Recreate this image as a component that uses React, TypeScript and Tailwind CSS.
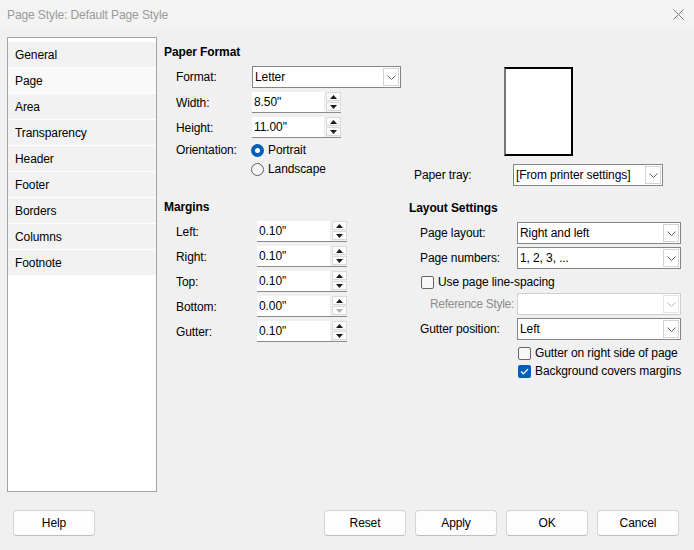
import React from "react";

const sideItems = ["General", "Page", "Area", "Transparency", "Header", "Footer", "Borders", "Columns", "Footnote"];

function Chevron({ muted }: { muted?: boolean }) {
  return (
    <svg width="9" height="5" viewBox="0 0 9 5">
      <polyline points="0.5,0.5 4.5,4.5 8.5,0.5" fill="none" stroke={muted ? "#b8b8b8" : "#606060"} strokeWidth="1" />
    </svg>
  );
}

function Dropdown({ value, w, disabled }: { value: string; w: string; disabled?: boolean }) {
  return (
    <div
      className={`flex h-[22px] bg-white border ${disabled ? "border-[#cfcfcf]" : "border-[#858585]"} ${w}`}
    >
      <div className="flex-1 flex items-center pl-[2px] truncate">{value}</div>
      <div
        className={`m-px w-[16px] flex items-center justify-center border ${disabled ? "border-[#e4e4e4]" : "border-[#d4d4d4]"}`}
      >
        <Chevron muted={disabled} />
      </div>
    </div>
  );
}

function Tri({ up, muted }: { up?: boolean; muted?: boolean }) {
  return (
    <svg width="7" height="4" viewBox="0 0 7 4">
      <polygon points={up ? "0,4 3.5,0 7,4" : "0,0 7,0 3.5,4"} fill={muted ? "#b0b0b0" : "#1a1a1a"} />
    </svg>
  );
}

function Spin({ value, w, downMuted }: { value: string; w: string; downMuted?: boolean }) {
  return (
    <div className={`flex h-[21px] border-b border-[#8a8a8a] ${w}`}>
      <div className="flex-1 bg-white flex items-center pl-[2px]">{value}</div>
      <div className="ml-[2px] w-[15px] flex flex-col gap-px pb-px">
        <div className="flex-1 bg-[#fbfbfb] border border-[#dadada] flex items-center justify-center">
          <Tri up />
        </div>
        <div className="flex-1 bg-[#fbfbfb] border border-[#dadada] flex items-center justify-center">
          <Tri muted={downMuted} />
        </div>
      </div>
    </div>
  );
}

function Radio({ checked, label }: { checked?: boolean; label: string }) {
  return (
    <div className="flex items-center h-[16px]">
      {checked ? (
        <div className="w-[13px] h-[13px] rounded-full bg-[#005fb8] flex items-center justify-center">
          <div className="w-[5px] h-[5px] rounded-full bg-white" />
        </div>
      ) : (
        <div className="w-[13px] h-[13px] rounded-full border border-[#5d5d5d] bg-[#f7f7f7]" />
      )}
      <span className="ml-[4px]">{label}</span>
    </div>
  );
}

function Check({ checked, label }: { checked?: boolean; label: string }) {
  return (
    <div className="flex items-center h-[16px]">
      {checked ? (
        <div className="w-[13px] h-[13px] rounded-[2px] bg-[#005fb8] flex items-center justify-center">
          <svg width="9" height="7" viewBox="0 0 9 7">
            <polyline points="1,3.5 3.4,5.8 8,1" fill="none" stroke="white" strokeWidth="1.2" />
          </svg>
        </div>
      ) : (
        <div className="w-[13px] h-[13px] rounded-[2px] border border-[#656565] bg-[#f7f7f7]" />
      )}
      <span className="ml-[4px] whitespace-nowrap">{label}</span>
    </div>
  );
}

function Btn({ label }: { label: string }) {
  return (
    <div className="w-[82px] h-[26px] rounded-[4px] border border-[#d3d3d3] border-b-[#bdbdbd] bg-[#fdfdfd] flex items-center justify-center">
      {label}
    </div>
  );
}

export default function App() {
  return (
    <div className="w-[694px] h-[550px] flex flex-col bg-[#f0f0f0] text-[12px] leading-[16px] text-black font-['Liberation_Sans',Arial,sans-serif] tracking-[-0.1px]">
      {/* title bar */}
      <div className="h-[29px] bg-[#f3f3f3] flex items-center justify-between pl-[7px] pr-[10px]">
        <span className="text-[#9a9a9a]">Page Style: Default Page Style</span>
        <svg width="11" height="11" viewBox="0 0 11 11">
          <path d="M0.5 0.5 L10.5 10.5 M10.5 0.5 L0.5 10.5" stroke="#7a7a7a" strokeWidth="1" />
        </svg>
      </div>

      <div className="flex pt-[8px] pl-[7px]">
        {/* sidebar */}
        <div className="w-[150px] h-[455px] border border-[#a3a3a3] bg-white pt-[4px] flex flex-col gap-px">
          {sideItems.map((s) => (
            <div
              key={s}
              className={`h-[25px] flex items-center pl-[7px] ${s === "Page" ? "bg-[#f9f9f9]" : "bg-[#f2f2f2]"}`}
            >
              {s}
            </div>
          ))}
        </div>

        {/* content */}
        <div className="ml-[7px] pt-[7px] flex flex-col">
          <div className="flex">
            {/* paper format */}
            <div className="w-[237px] flex flex-col">
              <div className="font-bold">Paper Format</div>
              <div className="pl-[12px] flex flex-col">
                <div className="flex items-center mt-[6px]">
                  <span className="w-[76px]">Format:</span>
                  <Dropdown value="Letter" w="w-[149px]" />
                </div>
                <div className="flex items-center mt-[4px]">
                  <span className="w-[76px]">Width:</span>
                  <Spin value={'8.50"'} w="w-[89px]" />
                </div>
                <div className="flex items-center mt-[4px]">
                  <span className="w-[76px]">Height:</span>
                  <Spin value={'11.00"'} w="w-[89px]" />
                </div>
                <div className="flex items-start mt-[4px]">
                  <span className="w-[75px] leading-[16px]">Orientation:</span>
                  <div className="flex flex-col gap-[3px]">
                    <Radio checked label="Portrait" />
                    <Radio label="Landscape" />
                  </div>
                </div>
              </div>
            </div>

            {/* preview + tray */}
            <div className="pl-[13px] flex flex-col">
              <div className="ml-[90px] mt-[23px] w-[69px] h-[89px] bg-white border-2 border-black border-l-[#777777]" />
              <div className="flex items-center mt-[8px]">
                <span className="w-[99px]">Paper tray:</span>
                <Dropdown value="[From printer settings]" w="w-[150px]" />
              </div>
            </div>
          </div>

          <div className="flex mt-[13px]">
            {/* margins */}
            <div className="w-[245px] flex flex-col">
              <div className="font-bold">Margins</div>
              <div className="pl-[12px] flex flex-col mt-[6px] gap-[4px]">
                {[
                  ["Left:", '0.10"'],
                  ["Right:", '0.10"'],
                  ["Top:", '0.10"'],
                  ["Bottom:", '0.00"'],
                  ["Gutter:", '0.10"'],
                ].map(([l, v]) => (
                  <div key={l} className="flex items-center">
                    <span className="w-[81px]">{l}</span>
                    <Spin value={v} w="w-[90px]" downMuted={l === "Bottom:"} />
                  </div>
                ))}
              </div>
            </div>

            {/* layout settings */}
            <div className="flex flex-col pt-px">
              <div className="font-bold">Layout Settings</div>
              <div className="pl-[11px] flex flex-col">
                <div className="flex items-center mt-[6px]">
                  <span className="w-[97px]">Page layout:</span>
                  <Dropdown value="Right and left" w="w-[164px]" />
                </div>
                <div className="flex items-center mt-[3px]">
                  <span className="w-[97px]">Page numbers:</span>
                  <Dropdown value="1, 2, 3, ..." w="w-[164px]" />
                </div>
                <div className="mt-[5px] pl-px">
                  <Check label="Use page line-spacing" />
                </div>
                <div className="flex items-center mt-[3px]">
                  <span className="w-[97px] pl-[10px] text-[#8d8d8d] whitespace-nowrap tracking-[-0.3px]">Reference Style:</span>
                  <Dropdown value="" w="w-[164px]" disabled />
                </div>
                <div className="flex items-center mt-[3px]">
                  <span className="w-[97px]">Gutter position:</span>
                  <Dropdown value="Left" w="w-[164px]" />
                </div>
                <div className="pl-[98px] mt-[5px] flex flex-col gap-[2px]">
                  <Check label="Gutter on right side of page" />
                  <Check checked label="Background covers margins" />
                </div>
              </div>
            </div>
          </div>
        </div>
      </div>

      {/* buttons */}
      <div className="flex mt-[18px] pl-[13px] pr-[15px]">
        <Btn label="Help" />
        <div className="flex-1" />
        <div className="flex gap-[9px]">
          <Btn label="Reset" />
          <Btn label="Apply" />
          <Btn label="OK" />
          <Btn label="Cancel" />
        </div>
      </div>
    </div>
  );
}
